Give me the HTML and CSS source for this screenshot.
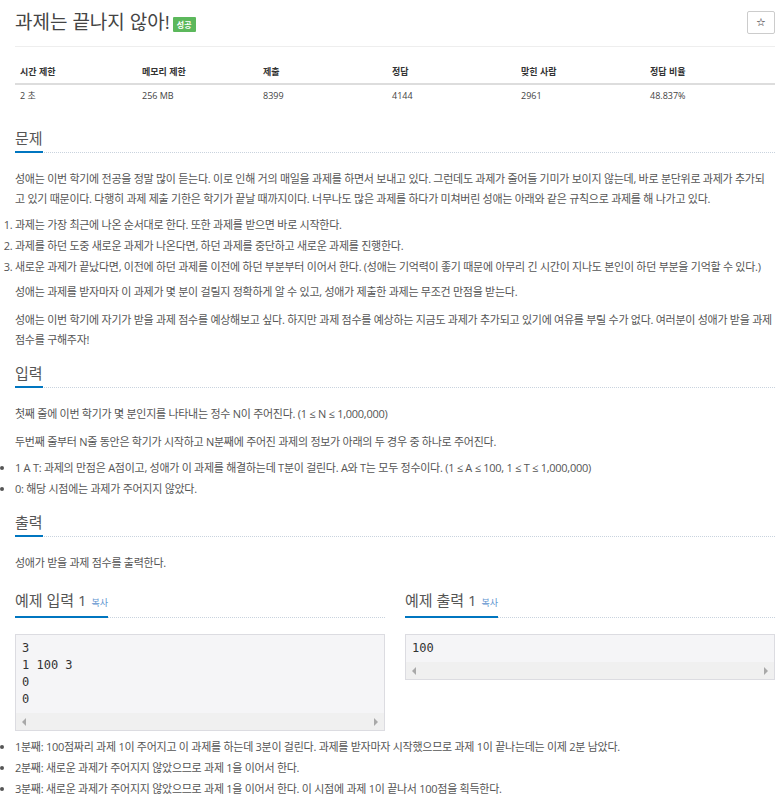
FILE: index.html
```html
<!DOCTYPE html>
<html lang="ko">
<head>
    <meta charset="UTF-8">
    <title>과제는 끝나지 않아!</title>
    <link rel="stylesheet" href="styles.css">
</head>
<body>
    <div class="page">
        <div class="page-header">
            <h1 class="title">과제는 끝나지 않아!<span class="label-success">성공</span></h1>
            <button class="star-btn" type="button">☆</button>
        </div>

        <table class="problem-info">
            <thead>
                <tr>
                    <th class="c1">시간 제한</th>
                    <th class="c2">메모리 제한</th>
                    <th class="c3">제출</th>
                    <th class="c3">정답</th>
                    <th class="c3">맞힌 사람</th>
                    <th>정답 비율</th>
                </tr>
            </thead>
            <tbody>
                <tr>
                    <td>2 초</td>
                    <td>256 MB</td>
                    <td>8399</td>
                    <td>4144</td>
                    <td>2961</td>
                    <td>48.837%</td>
                </tr>
            </tbody>
        </table>

        <section class="problem-section">
            <div class="headline"><h2>문제</h2></div>
            <div class="problem-text">
                <p>성애는 이번 학기에 전공을 정말 많이 듣는다. 이로 인해 거의 매일을 과제를 하면서 보내고 있다. 그런데도 과제가 줄어들 기미가 보이지 않는데, 바로 분단위로 과제가 추가되고 있기 때문이다. 다행히 과제 제출 기한은 학기가 끝날 때까지이다. 너무나도 많은 과제를 하다가 미쳐버린 성애는 아래와 같은 규칙으로 과제를 해 나가고 있다.</p>
                <ol>
                    <li>과제는 가장 최근에 나온 순서대로 한다. 또한 과제를 받으면 바로 시작한다.</li>
                    <li>과제를 하던 도중 새로운 과제가 나온다면, 하던 과제를 중단하고 새로운 과제를 진행한다.</li>
                    <li>새로운 과제가 끝났다면, 이전에 하던 과제를 이전에 하던 부분부터 이어서 한다. (성애는 기억력이 좋기 때문에 아무리 긴 시간이 지나도 본인이 하던 부분을 기억할 수 있다.)</li>
                </ol>
                <p>성애는 과제를 받자마자 이 과제가 몇 분이 걸릴지 정확하게 알 수 있고, 성애가 제출한 과제는 무조건 만점을 받는다.</p>
                <p>성애는 이번 학기에 자기가 받을 과제 점수를 예상해보고 싶다. 하지만 과제 점수를 예상하는 지금도 과제가 추가되고 있기에 여유를 부릴 수가 없다. 여러분이 성애가 받을 과제 점수를 구해주자!</p>
            </div>
        </section>

        <section class="problem-section">
            <div class="headline"><h2>입력</h2></div>
            <div class="problem-text">
                <p>첫째 줄에 이번 학기가 몇 분인지를 나타내는 정수 N이 주어진다. (1 ≤ N ≤ 1,000,000)</p>
                <p>두번째 줄부터 N줄 동안은 학기가 시작하고 N분째에 주어진 과제의 정보가 아래의 두 경우 중 하나로 주어진다.</p>
                <ul>
                    <li>1 A T: 과제의 만점은 A점이고, 성애가 이 과제를 해결하는데 T분이 걸린다. A와 T는 모두 정수이다. (1 ≤ A ≤ 100, 1 ≤ T ≤ 1,000,000)</li>
                    <li>0: 해당 시점에는 과제가 주어지지 않았다.</li>
                </ul>
            </div>
        </section>

        <section class="problem-section">
            <div class="headline"><h2>출력</h2></div>
            <div class="problem-text">
                <p>성애가 받을 과제 점수를 출력한다.</p>
            </div>
        </section>

        <div class="samples">
            <section class="sample">
                <div class="headline"><h2>예제 입력 1 <a class="copy" href="#">복사</a></h2></div>
                <div class="sample-box">
                    <pre>3
1 100 3
0
0</pre>
                    <div class="hscroll"><span class="arr-l"></span><span class="arr-r"></span></div>
                </div>
            </section>
            <section class="sample">
                <div class="headline"><h2>예제 출력 1 <a class="copy" href="#">복사</a></h2></div>
                <div class="sample-box">
                    <pre>100</pre>
                    <div class="hscroll"><span class="arr-l"></span><span class="arr-r"></span></div>
                </div>
            </section>
        </div>

        <div class="problem-text hint">
            <ul>
                <li>1분째: 100점짜리 과제 1이 주어지고 이 과제를 하는데 3분이 걸린다. 과제를 받자마자 시작했으므로 과제 1이 끝나는데는 이제 2분 남았다.</li>
                <li>2분째: 새로운 과제가 주어지지 않았으므로 과제 1을 이어서 한다.</li>
                <li>3분째: 새로운 과제가 주어지지 않았으므로 과제 1을 이어서 한다. 이 시점에 과제 1이 끝나서 100점을 획득한다.</li>
            </ul>
        </div>
    </div>
</body>
</html>
```
FILE: styles.css
```css
*{
    margin: 0;
    padding: 0;
    box-sizing: border-box;
}
body{
    font-family: "Open Sans", "Noto Sans CJK KR", sans-serif;
    color: #555;
    background: #fff;
}
.page{
    width: 760px;
    margin-left: 15px;
}

/* 제목 */
.page-header{
    display: flex;
    justify-content: space-between;
    align-items: center;
    padding: 10px 0 12px;
    border-bottom: 1px solid #eee;
}
.title{
    font-size: 19px;
    font-weight: normal;
    line-height: 24px;
    color: #444;
    display: flex;
    align-items: center;
}
.label-success{
    display: inline-block;
    margin-left: 3px;
    margin-top: 4px;
    width: 23px;
    height: 15px;
    line-height: 15px;
    text-align: center;
    font-size: 8px;
    font-weight: bold;
    color: #fff;
    background: #5cb85c;
    border-radius: 1px;
}
.star-btn{
    width: 28px;
    height: 23px;
    border: 1px solid #ccc;
    border-radius: 2px;
    background: #fff;
    color: #111;
    font-family: "DejaVu Sans", sans-serif;
    font-size: 11px;
}

/* 정보 표 */
.problem-info{
    width: 760px;
    margin-top: 13px;
    border-collapse: collapse;
    font-size: 9px;
    line-height: 13px;
    color: #333;
}
.problem-info th{
    text-align: left;
    font-weight: bold;
    padding: 5px 5px;
    border-bottom: 2px solid #ddd;
}
.problem-info td{
    padding: 4px 5px;
    color: #444;
}
.problem-info .c1{ width: 122px; }
.problem-info .c2{ width: 121px; }
.problem-info .c3{ width: 129px; }

/* 본문 */
.problem-section{
    margin-top: 21px;
}
.problem-section + .problem-section{
    margin-top: 12px;
}
.headline{
    border-bottom: 1px dotted #c9d3de;
    margin-bottom: 16px;
}
.headline h2{
    display: inline-block;
    font-size: 15px;
    font-weight: normal;
    line-height: 20px;
    color: #555;
    padding-bottom: 3px;
    border-bottom: 2px solid #0076c0;
    margin-bottom: -1px;
}
.headline .copy{
    font-size: 9px;
    color: #5e94cf;
    text-decoration: none;
    margin-left: 1px;
}
.problem-text{
    font-size: 11px;
    line-height: 20px;
    letter-spacing: -0.27px;
}
.problem-section .problem-text{
    width: 757px;
}
.problem-text p{
    margin-bottom: 8px;
}
.problem-text p:last-child{
    margin-bottom: 0;
}
.problem-text ol,
.problem-text ul{
    margin: -3px 0 5px;
}
.problem-text ul:last-child{
    margin-bottom: 0;
}
.problem-text li{
    line-height: 21px;
}

/* 예제 */
.samples{
    display: grid;
    grid-template-columns: 370px 370px;
    column-gap: 20px;
    align-items: start;
    margin-top: 16px;
}
.sample-box{
    border: 1px solid #dcdce1;
    background: #f5f5f7;
}
.sample-box pre{
    font-family: "DejaVu Sans Mono", monospace;
    font-size: 12px;
    line-height: 17px;
    color: #333;
    padding: 5px 6px;
}
.hscroll{
    height: 17px;
    background: #f0f0f0;
    display: flex;
    justify-content: space-between;
    align-items: center;
    padding: 0 6px;
}
.arr-l{
    width: 0;
    height: 0;
    border-top: 4px solid transparent;
    border-bottom: 4px solid transparent;
    border-right: 4px solid #a9a9a9;
}
.arr-r{
    width: 0;
    height: 0;
    border-top: 4px solid transparent;
    border-bottom: 4px solid transparent;
    border-left: 4px solid #a9a9a9;
}
.hint{
    margin-top: 5px;
}
.hint ul{
    margin: 0;
}
```
